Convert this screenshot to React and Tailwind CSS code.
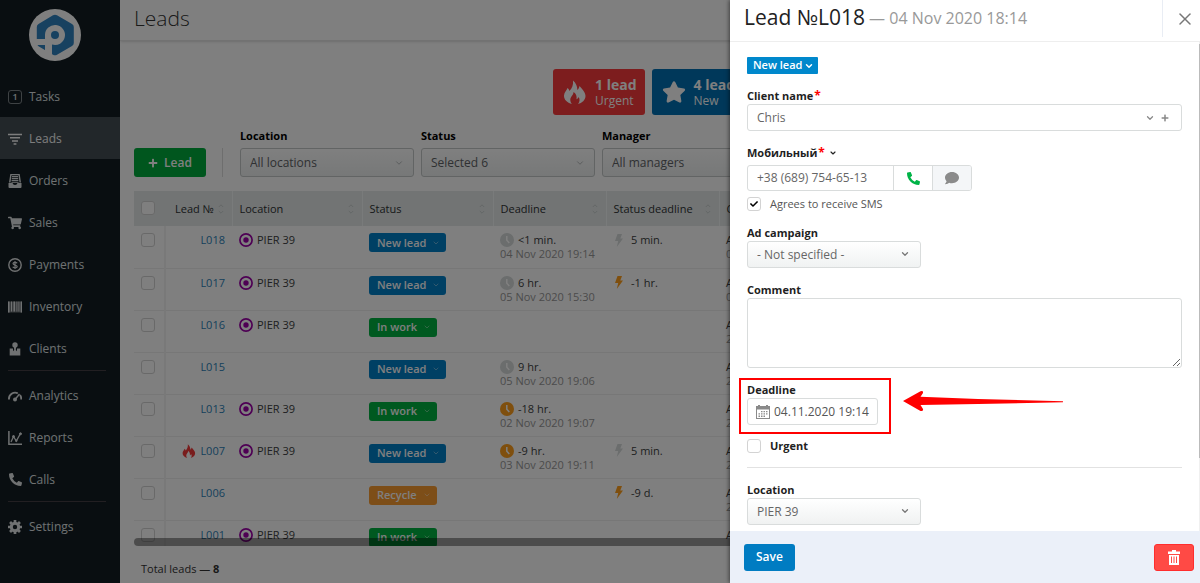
import React from "react";
import { FaStar, FaPlus, FaShoppingCart, FaComment, FaCheck, FaPhoneAlt } from "react-icons/fa";
import { ChevronDown, X } from "lucide-react";

function Logo() {
  return (
    <svg viewBox="0 0 52 52" className="size-[52px]" role="img" aria-label="Poster">
      <circle cx="26" cy="26" r="26" fill="#ffffff" />
      <path d="M24 6.3Q26 5.2 28 6.3L43 15Q44.800 16 44.800 18V34Q44.800 36 43 37L28 45.700Q26 46.800 24 45.700L9.500 37.200Q7.800 36 7.800 34V18Q7.800 16 9.500 15Z" fill="#2f82c0" />
      <path d="M7 30H16V26A10 10 0 1 1 23 35.600V49H16V36H7Z" fill="#ffffff" />
      <circle cx="26" cy="26" r="4" fill="#2f82c0" />
    </svg>
  );
}

function Flame({ className }) {
  return (
    <svg viewBox="0 0 24 24" fill="currentColor" className={className} aria-hidden="true">
      <path d="M10 .5C13 3 14.500 6.500 14.300 10C15.500 9 16.300 7.500 16.500 6C19.500 9.500 22.500 12.500 22.500 16C22.500 20 19 23 15 24C17 21.500 17 19 15.500 17C15 18.500 14.300 19 13.500 19.300C14 16 13 13.500 10.500 12C10.700 15 7.300 16.500 7.300 20C7.300 21.500 8 23 9 24C4 22.800 .8 19.500 1 15.500C1.200 12 3.700 10.500 4.500 8C5.800 9 6.300 10 6.300 11C9 8.500 10.500 5 10 .5Z" />
    </svg>
  );
}

function Bolt({ late }) {
  return (
    <svg viewBox="0 0 8 13" fill="currentColor" className={"ml-0.5 mr-2 h-[13px] w-2 " + (late ? "text-[#ff9f1c]" : "text-[#d6dada]")} aria-hidden="true">
      <path d="M2.500 0H7L5.300 4.500H8L1.800 13L3.200 7H0Z" />
    </svg>
  );
}

function Clock({ late }) {
  return (
    <svg viewBox="0 0 14 14" className={"mr-1 size-3.5 " + (late ? "text-[#ff9f1c]" : "text-[#d6dada]")} aria-hidden="true">
      <circle cx="7" cy="7" r="7" fill="currentColor" />
      <path d="M6.800 3V7.200L9.300 10" fill="none" stroke="#ffffff" strokeWidth="1.500" />
    </svg>
  );
}

function Target() {
  return (
    <svg viewBox="0 0 14 14" className="mr-1 size-3.5" aria-hidden="true">
      <circle cx="7" cy="7" r="6.100" fill="none" stroke="#9c00a8" strokeWidth="1.700" />
      <circle cx="7" cy="7" r="2.700" fill="#9c00a8" />
    </svg>
  );
}

function NavGlyph({ name }) {
  const common = { viewBox: "0 0 14 14", className: "size-3.5", "aria-hidden": true };
  switch (name) {
    case "tasks":
      return <span className="grid size-3.5 place-items-center rounded-[3px] border border-[#7c8488] text-[9px] font-semibold leading-none">1</span>;
    case "leads":
      return <svg {...common} stroke="currentColor" strokeWidth="1.500"><path d="M0 2.500H14M2 5.800H12M4 9.100H10M5.600 12H8.400" /></svg>;
    case "orders":
      return (
        <svg {...common} fill="currentColor">
          <path d="M2.300 0H11.700L13 8.500H11.500L10.500 1.200H3.500L2.500 8.500H1ZM4 2H10V3.200H4ZM3.800 4H10.200V5.200H3.800ZM3.600 6H10.400V7.200H3.600ZM3.400 8H10.600V8.700H3.400Z" />
          <path d="M.5 9H4.500Q5 11 7 11T9.500 9H13.500V13Q13.500 14 12.500 14H1.500Q.5 14 .5 13Z" />
        </svg>
      );
    case "sales":
      return <FaShoppingCart className="size-3.5" />;
    case "payments":
      return (
        <svg {...common} fill="none" stroke="currentColor">
          <circle cx="7" cy="7" r="6.200" strokeWidth="1.400" />
          <path d="M9.100 5.200C8.700 4.300 5 3.900 5 5.600S9.200 6.900 9.200 8.600S5.200 9.900 4.800 8.700M7 3V11" strokeWidth="1.200" />
        </svg>
      );
    case "inventory":
      return (
        <svg {...common} fill="currentColor">
          <path d="M0 1.500H14V12.500H0Z" opacity=".45" />
          <path d="M0 1.500H1.500V12.500H0ZM3 1.500H4V11.500H3ZM5.500 1.500H7V11.500H5.500ZM8.500 1.500H9.300V11.500H8.500ZM10.500 1.500H11.300V11.500H10.500ZM12.700 1.500H14V12.500H12.700Z" />
        </svg>
      );
    case "clients":
      return (
        <svg {...common} fill="currentColor">
          <circle cx="7" cy="3" r="2.700" />
          <path d="M5.900 5H8.100L7.800 8L9 9.300V6.500H12.300V13.500H1.700V6.500H5V9.300L6.200 8Z" />
        </svg>
      );
    case "analytics":
      return (
        <svg {...common} fill="none" stroke="currentColor">
          <path d="M1 10.500A6.200 6.200 0 0 1 9.800 4.300M12 6A6.200 6.200 0 0 1 13.200 10.500" strokeWidth="1.900" />
          <circle cx="7" cy="10.500" r="2" fill="currentColor" stroke="none" />
          <path d="M7 10.500L11.500 5" strokeWidth="1.400" />
        </svg>
      );
    case "reports":
      return (
        <svg {...common} fill="none" stroke="currentColor">
          <path d="M.9 0V13.200H14" strokeWidth="1.500" />
          <path d="M3 11L5.500 5.500L8.300 10L12.500 2.500" strokeWidth="1.300" />
          <circle cx="5.500" cy="5.500" r="1" fill="currentColor" />
          <circle cx="12.500" cy="2.800" r="1" fill="currentColor" />
          <circle cx="8.300" cy="9.800" r=".8" fill="currentColor" />
        </svg>
      );
    case "calls":
      return <FaPhoneAlt className="size-[13px]" />;
    default:
      return (
        <svg {...common} fill="none" stroke="currentColor">
          <circle cx="7" cy="7" r="3.700" strokeWidth="3" />
          <path d="M7 0V3M7 11V14M0 7H3M11 7H14M2.050 2.050L4.200 4.200M9.800 9.800L11.950 11.950M2.050 11.950L4.200 9.800M9.800 4.200L11.950 2.050" strokeWidth="2.700" />
        </svg>
      );
  }
}

function NavItem({ icon, label, active }) {
  return (
    <a
      href={"#" + icon}
      aria-current={active ? "page" : undefined}
      className={"flex h-[42px] items-center gap-[7px] pl-2 pt-px text-[12px] " + (active ? "bg-[#454f54] text-[#fafafa]" : "text-[#dfe2e4]")}
    >
      <span className="flex w-3.5 justify-center">
        <NavGlyph name={icon} />
      </span>
      {label}
    </a>
  );
}

function NavDivider() {
  return <hr className="mb-[3px] mt-px ml-2 mr-3.5 border-[#453f44]" />;
}

function Tick({ id, label, checked }) {
  return (
    <span className="relative inline-flex size-3.5 shrink-0">
      <input
        id={id}
        type="checkbox"
        aria-label={label}
        defaultChecked={checked}
        className="peer size-3.5 appearance-none rounded-[3px] border border-[#d3d3d3] bg-white"
      />
      <FaCheck className="pointer-events-none absolute left-[3px] top-[3px] hidden size-2 text-black peer-checked:block" />
    </span>
  );
}

function Filter({ id, label, value }) {
  return (
    <div className="flex w-[174px] shrink-0 flex-col">
      <label htmlFor={id} className="h-5 text-[11px] font-bold leading-4 text-black">{label}</label>
      <div className="relative">
        <select id={id} className="block h-[29px] w-full appearance-none rounded-[3px] border border-[#c4c8c8] bg-linear-to-b from-white to-[#eef1f1] pl-[9px] text-[12px] text-[#606366]">
          <option>{value}</option>
        </select>
        <ChevronDown className="pointer-events-none absolute right-2.5 top-2.5 size-2.5 text-[#aaaeb0]" />
      </div>
    </div>
  );
}

function Sort() {
  return (
    <svg viewBox="0 0 6 10" className="h-2.5 w-1.5 fill-none stroke-[#c8cecd]" aria-hidden="true">
      <path d="M.8 3L3 .8L5.200 3M.8 7L3 9.200L5.200 7" />
    </svg>
  );
}

function HeadCell({ children }) {
  return (
    <th scope="col" className="border-l border-[#f3f6f6] pl-[7px] pr-2 text-left font-normal">
      <span className="flex items-center justify-between">
        {children}
        <Sort />
      </span>
    </th>
  );
}

const STATUS_COLORS = {
  "New lead": "bg-[#0080c8]",
  "In work": "bg-[#00b341]",
  Recycle: "bg-[#fb9c30]",
};

const LEADS = [
  { id: "L018", place: true, status: "New lead", due: "<1 min.", date: "04 Nov 2020 19:14", left: "5 min.", tail: "0" },
  { id: "L017", place: true, status: "New lead", due: "6 hr.", date: "05 Nov 2020 15:30", left: "-1 hr.", tail: "0" },
  { id: "L016", place: true, status: "In work", tail: "2" },
  { id: "L015", status: "New lead", due: "9 hr.", date: "05 Nov 2020 19:06", tail: "2" },
  { id: "L013", place: true, status: "In work", due: "-18 hr.", date: "02 Nov 2020 19:07", tail: "2" },
  { id: "L007", place: true, status: "New lead", due: "-9 hr.", date: "03 Nov 2020 19:11", left: "5 min.", tail: "2", hot: true },
  { id: "L006", status: "Recycle", left: "-9 d.", tail: "2" },
  { id: "L001", place: true, status: "In work" },
];

function LeadRow({ lead }) {
  return (
    <tr className="h-[42px] border-b border-[#eeeeee] align-top text-[#3c3f42]">
      <td className="border-r-2 border-[#f3f3f3] pl-[7px] pt-[7px]">
        <Tick label={"Select " + lead.id} />
      </td>
      <td className="pr-[7px] pt-[7px]">
        <span className="flex items-center justify-end gap-1">
          {lead.hot && <Flame className="size-3.5 text-[#f23a3a]" />}
          <a href={"#" + lead.id} className="text-[#2c82b8]">{lead.id}</a>
        </span>
      </td>
      <td className="pl-[7px] pt-[7px]">
        {lead.place && <span className="flex items-center"><Target />PIER 39</span>}
      </td>
      <td className="pl-[7px] pt-[7px]">
        <button type="button" className={"flex h-[19px] items-center gap-1.5 rounded-[3px] pl-2 pr-1.5 text-[11px] font-semibold text-white " + STATUS_COLORS[lead.status]}>
          {lead.status}
          <ChevronDown className="size-2 opacity-60" />
        </button>
      </td>
      <td className="whitespace-nowrap pl-[7px] pt-[7px]">
        {lead.due && (
          <>
            <span className="flex items-center"><Clock late={lead.due.startsWith("-")} />{lead.due}</span>
            <span className="text-[#989898]">{lead.date}</span>
          </>
        )}
      </td>
      <td className="pl-[7px] pt-[7px]">
        {lead.left && <span className="flex items-center"><Bolt late={lead.left.startsWith("-")} />{lead.left}</span>}
      </td>
      <td className="pl-[7px] pt-[7px]">
        A<span className="block text-[#989898]">{lead.tail}</span>
      </td>
    </tr>
  );
}

function Tile({ icon, count, label, className }) {
  return (
    <button type="button" className={"flex h-[46px] items-center gap-2 rounded-[3px] pl-2.5 pr-2 text-left text-white " + className}>
      {icon}
      <span className="flex flex-col pt-0.5">
        <span className="text-[14px] font-bold leading-4">{count}</span>
        <span className="text-[12px] leading-4">{label}</span>
      </span>
    </button>
  );
}

function FieldLabel({ htmlFor, required, children }) {
  return (
    <label htmlFor={htmlFor} className="flex h-4 items-center gap-px text-[11px] font-bold text-[#1f1f1f]">
      {children}
      {required && <span className="text-[12px] leading-none text-[#f00]">*</span>}
    </label>
  );
}

function Field({ children }) {
  return <div className="relative mt-3.5">{children}</div>;
}

function FormSelect({ id, value }) {
  return (
    <div className="relative w-[174px]">
      <select id={id} className="block h-[27px] w-full appearance-none rounded-[3px] border border-[#d9dcdc] bg-linear-to-b from-white to-[#f0f2f2] pl-[9px] text-[12px] text-[#666666]">
        <option>{value}</option>
      </select>
      <ChevronDown className="pointer-events-none absolute right-[11px] top-2 size-2.5 text-[#777777]" strokeWidth={3} />
    </div>
  );
}

function LeadsPage() {
  return (
    <div className="flex h-full">
      <nav className="flex w-[120px] shrink-0 flex-col bg-[#131d22]">
        <div className="flex h-[75px] pl-[29px] pt-[9px]"><Logo /></div>
        <NavItem icon="tasks" label="Tasks" />
        <NavItem icon="leads" label="Leads" active />
        <NavItem icon="orders" label="Orders" />
        <NavItem icon="sales" label="Sales" />
        <NavItem icon="payments" label="Payments" />
        <NavItem icon="inventory" label="Inventory" />
        <NavItem icon="clients" label="Clients" />
        <NavDivider />
        <NavItem icon="analytics" label="Analytics" />
        <NavItem icon="reports" label="Reports" />
        <NavItem icon="calls" label="Calls" />
        <NavDivider />
        <NavItem icon="settings" label="Settings" />
      </nav>
      <main className="flex min-w-0 flex-1 flex-col overflow-hidden bg-white">
        <header className="h-[41px] shrink-0 border-b border-[#e4e4e4] pl-3.5 pt-1 shadow-sm">
          <h1 className="text-[21px] font-light leading-7 text-[#333333]">Leads</h1>
        </header>
        <div className="flex shrink-0 gap-[7px] pl-[433px] pt-7">
          <Tile icon={<Flame className="size-6" />} count="1 lead" label="Urgent" className="bg-[#fa3a3c]" />
          <Tile icon={<FaStar className="size-6" />} count="4 leads" label="New" className="bg-[#0070b4]" />
        </div>
        <div className="flex shrink-0 items-end pb-3.5 pl-3.5 pt-[13px]">
          <button type="button" className="flex h-[29px] shrink-0 items-center gap-1.5 rounded-[3px] bg-[#00ad3c] px-3.5 text-[12px] font-semibold text-white">
            <FaPlus className="size-2.5" />
            Lead
          </button>
          <div className="ml-4 mr-[17px] h-[29px] w-px shrink-0 bg-[#dddddd]" />
          <div className="flex gap-[7px]">
            <Filter id="filter-location" label="Location" value="All locations" />
            <Filter id="filter-status" label="Status" value="Selected 6" />
            <Filter id="filter-manager" label="Manager" value="All managers" />
          </div>
        </div>
        <div className="relative ml-3.5 min-h-0 flex-1 overflow-hidden">
          <table className="w-full table-fixed border-collapse text-[11px] leading-[14px]">
            <colgroup>
              <col className="w-[31px]" />
              <col className="w-[67px]" />
              <col className="w-[130px]" />
              <col className="w-[131px]" />
              <col className="w-[113px]" />
              <col className="w-[113px]" />
              <col />
            </colgroup>
            <thead>
              <tr className="h-[35px] bg-[#e4e9e9] text-[#2f3234]">
                <th scope="col" className="pl-[7px] text-left leading-none"><Tick label="Select all leads" /></th>
                <th scope="col" className="pl-2.5 pr-2 text-left font-normal">
                  <span className="flex items-center justify-between whitespace-nowrap">Lead № <Sort /></span>
                </th>
                <HeadCell>Location</HeadCell>
                <HeadCell>Status</HeadCell>
                <HeadCell>Deadline</HeadCell>
                <HeadCell>Status deadline</HeadCell>
                <HeadCell>C</HeadCell>
              </tr>
            </thead>
            <tbody>
              {LEADS.map((lead) => <LeadRow key={lead.id} lead={lead} />)}
            </tbody>
          </table>
          <div className="absolute inset-x-0 bottom-0 h-2 rounded-full bg-black/40" />
        </div>
        <footer className="h-[37px] shrink-0 pl-[21px] pt-[15px] text-[11px] leading-4 text-[#333333]">
          Total leads — <b>8</b>
        </footer>
      </main>
    </div>
  );
}

function LeadDrawer() {
  return (
    <aside role="dialog" aria-labelledby="lead-title" className="absolute inset-y-0 right-0 flex w-[470px] flex-col bg-white shadow-[-1px_0_4px_rgba(0,0,0,0.5)]">
      <header className="flex h-[42px] shrink-0 border-b border-[#eeeeee]">
        <h2 id="lead-title" className="flex flex-1 items-center gap-1 pb-1.5 pl-3.5 text-[21px] text-[#222222]">
          Lead №L018
          <span className="text-[16px] text-[#999999]">— 04 Nov 2020 18:14</span>
        </h2>
        <button type="button" aria-label="Close" className="mb-1 grid w-[38px] place-items-center border-l border-[#e9edf4] pl-1.5 text-[#777777]">
          <X className="size-5" strokeWidth={1.8} />
        </button>
      </header>
      <form className="flex min-h-0 flex-1 flex-col" onSubmit={(e) => e.preventDefault()}>
        <div className="flex min-h-0 flex-1 overflow-hidden">
          <div className="min-w-0 flex-1 px-[17px] pt-[15px]">
            <button type="button" className="flex h-[17px] items-center gap-0.5 rounded-[1px] bg-[#0088cc] pl-1.5 pr-1 text-[11px] font-semibold text-white">
              New lead
              <ChevronDown className="size-2.5" strokeWidth={3.5} />
            </button>

            <Field>
              <FieldLabel htmlFor="client" required>Client name</FieldLabel>
              <div className="flex h-[27px] items-center gap-1.5 rounded-[3px] border border-[#d9dcdc] pl-[9px] pr-3 text-[#888888]">
                <input id="client" defaultValue="Chris" className="min-w-0 flex-1 text-[12px] text-[#666666] outline-none" />
                <ChevronDown className="size-2.5" strokeWidth={3} />
                <FaPlus className="size-2" />
              </div>
            </Field>

            <Field>
              <div className="mb-1 flex items-center gap-1">
                <FieldLabel htmlFor="phone" required>Мобильный</FieldLabel>
                <ChevronDown className="size-2 text-[#222222]" strokeWidth={3.5} />
              </div>
              <div className="flex h-[26px] w-[225px] overflow-hidden rounded-[3px] border border-[#d9dcdc]">
                <input id="phone" type="tel" defaultValue="+38 (689) 754-65-13" className="min-w-0 flex-1 pl-[9px] text-[12px] text-[#666666]" />
                <button type="button" aria-label="Call" className="grid w-[39px] place-items-center border-l border-[#d9dcdc] text-[#00b347]">
                  <FaPhoneAlt className="size-[13px]" />
                </button>
                <button type="button" aria-label="Send message" className="grid w-[39px] place-items-center border-l border-[#d9dcdc] bg-[#f4f6f8] text-[#8b8b8b]">
                  <FaComment className="size-3.5" />
                </button>
              </div>
            </Field>
            <div className="mt-1.5 flex h-3.5 items-center gap-[9px]">
              <Tick id="sms" checked />
              <label htmlFor="sms" className="text-[11px] text-[#555555]">Agrees to receive SMS</label>
            </div>

            <Field>
              <FieldLabel htmlFor="campaign">Ad campaign</FieldLabel>
              <FormSelect id="campaign" value="- Not specified -" />
            </Field>

            <Field>
              <FieldLabel htmlFor="comment">Comment</FieldLabel>
              <textarea id="comment" className="block h-[70px] w-full rounded-[3px] border border-[#d9dcdc] p-2 text-[12px]" />
            </Field>

            <Field>
              <FieldLabel htmlFor="deadline">Deadline</FieldLabel>
              <div className="flex h-[27px] w-[131px] items-center gap-1 rounded-[3px] border border-[#d9dcdc] pl-2">
                <svg viewBox="0 0 14 14" className="size-3.5 shrink-0 fill-[#8a8a8a]" aria-hidden="true">
                  <path d="M0 1H2V0H4V1H10V0H12V1H14V4.500H0ZM0 4.500H1V13H13V4.500H14V14H0Z" />
                  <path d="M5 6H6.500V7.300H5ZM7.500 6H9V7.300H7.500ZM10 6H11.500V7.300H10ZM2.500 8.300H4V9.600H2.500ZM5 8.300H6.500V9.600H5ZM7.500 8.300H9V9.600H7.500ZM10 8.300H11.500V9.600H10ZM2.500 10.600H4V11.900H2.500ZM5 10.600H6.500V11.900H5ZM7.500 10.600H9V11.900H7.500Z" />
                </svg>
                <input id="deadline" defaultValue="04.11.2020 19:14" className="min-w-0 flex-1 text-[12px] text-[#555555] outline-none" />
              </div>
              <div className="pointer-events-none absolute -left-2 -top-1 h-[56px] w-[152px] border-2 border-[#f00]" />
              <svg viewBox="0 0 160 22" className="pointer-events-none absolute left-[156px] top-2 h-[22px] w-40 fill-[#f00]" aria-hidden="true">
                <path d="M0 11L17.500 1.300Q20.500 .5 20 3L17.500 6.800L75 9L160 11.300V12.300L75 14L17.500 15L20 19Q20.500 21.500 17.500 21Z" />
              </svg>
            </Field>

            <div className="mt-3.5 flex h-3.5 items-center gap-[9px]">
              <Tick id="urgent" />
              <label htmlFor="urgent" className="text-[11px] font-bold text-[#222222]">Urgent</label>
            </div>

            <hr className="mt-3.5 border-[#e2e2e2]" />

            <Field>
              <FieldLabel htmlFor="location">Location</FieldLabel>
              <FormSelect id="location" value="PIER 39" />
            </Field>
          </div>
          <div className="w-px bg-[#f0f0f0] pt-0.5">
            <div className="h-[85%] bg-[#bbbbbb]" />
          </div>
        </div>
        <footer className="flex h-[52px] shrink-0 items-center justify-between bg-[#ebf0f9] pl-3.5 pr-1.5">
          <button type="submit" className="h-[27px] rounded-[3px] bg-[#007cc2] px-3 text-[12px] font-semibold text-white">Save</button>
          <button type="button" aria-label="Delete lead" className="grid h-[27px] w-10 place-items-center rounded-[3px] border border-[#ff2d2d] bg-[#ff4a45] text-white">
            <svg viewBox="0 0 12 15" className="h-[15px] w-3" fill="currentColor" aria-hidden="true">
              <path d="M4 0H8V1.500H12V4H0V1.500H4Z" />
              <path fillRule="evenodd" d="M1 5H11V15H1ZM3 6.500V13H4V6.500ZM5.500 6.500V13H6.500V6.500ZM8 6.500V13H9V6.500Z" />
            </svg>
          </button>
        </footer>
      </form>
    </aside>
  );
}

export default function App() {
  return (
    <div className="relative h-screen overflow-hidden font-['Open_Sans','Noto_Sans',sans-serif]">
      <LeadsPage />
      <div className="absolute inset-0 bg-black/50" />
      <LeadDrawer />
    </div>
  );
}
